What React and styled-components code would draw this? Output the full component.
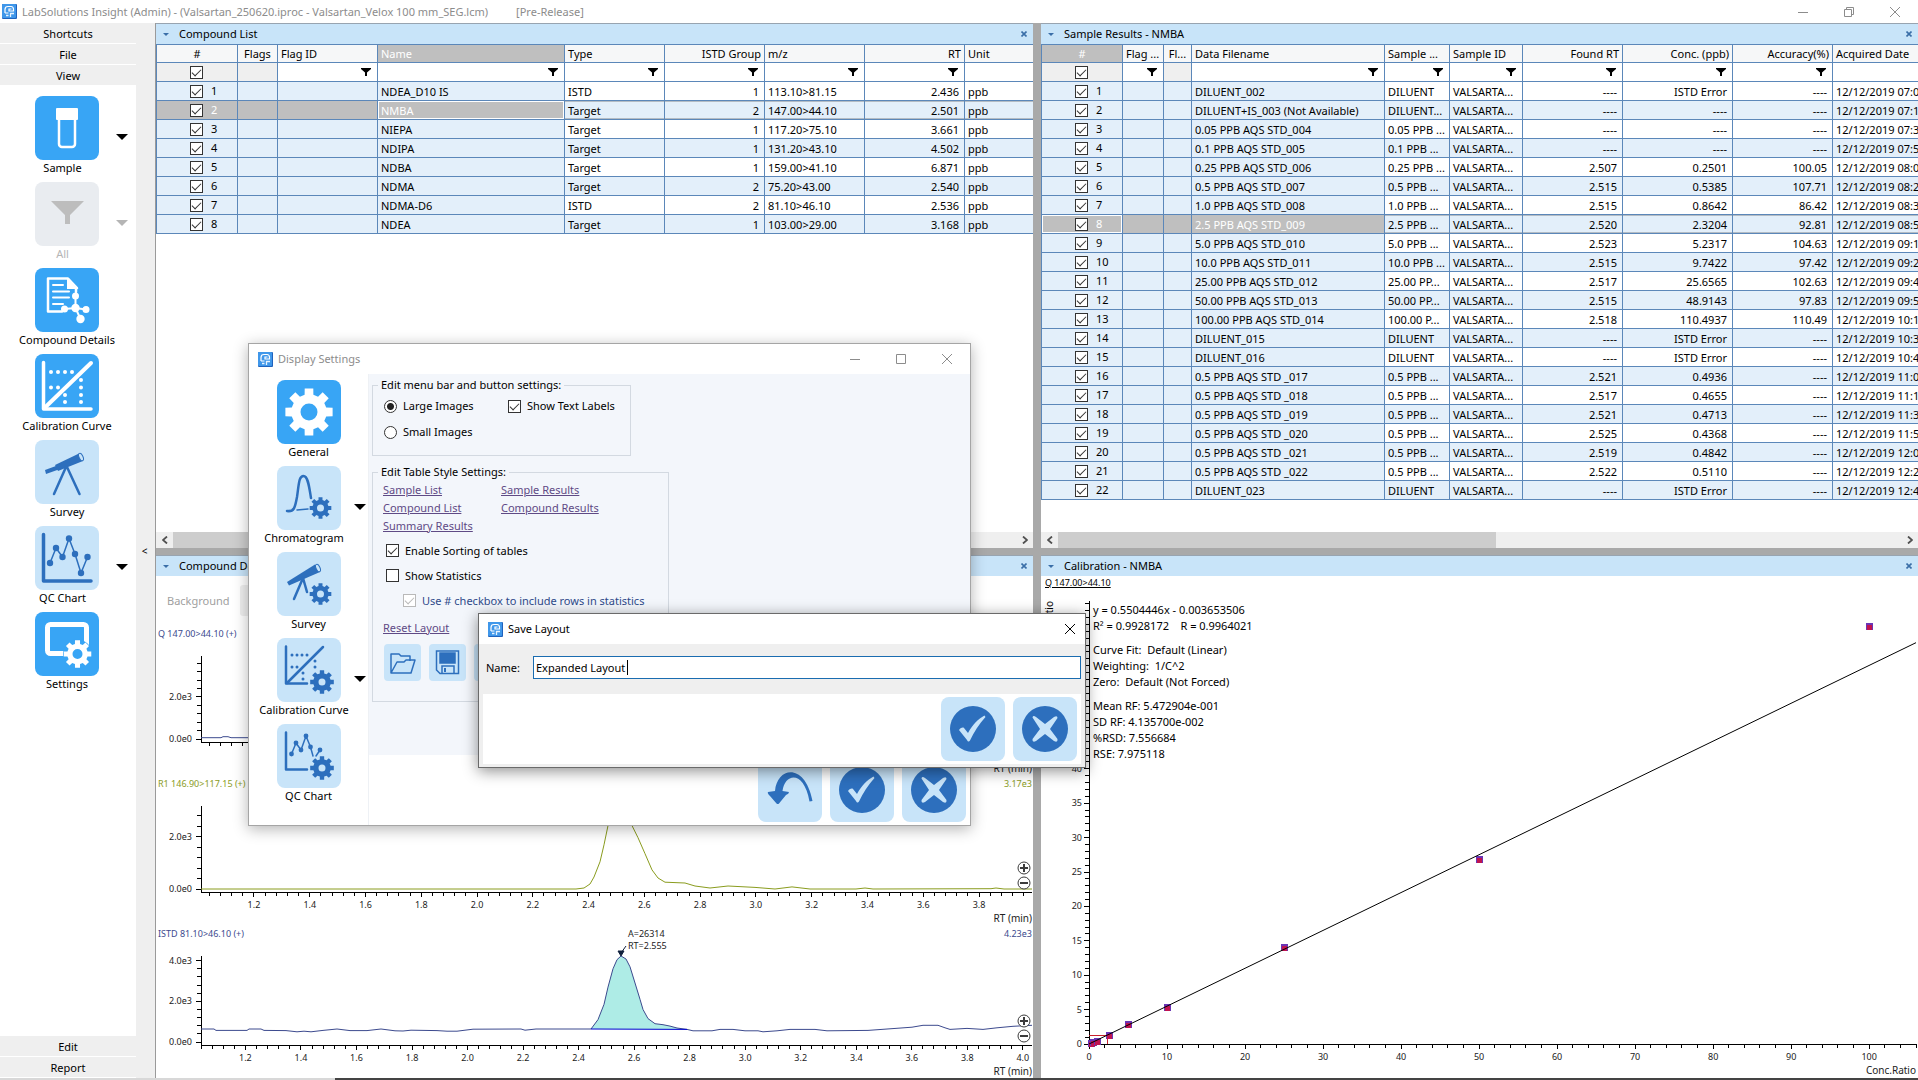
import { useLayoutEffect, useRef, useState } from 'react'
import styled, { createGlobalStyle, css } from 'styled-components'

const colors = {
  tileOn: '#38a5f5',
  tileOff: '#c8e4f9',
  tileDisabled: '#e9ecf0',
  icon: '#2d6fbd',
  header: '#c8e4f9',
  grid: '#5b87b9',
  rowBlue: '#e3effa',
  selected: '#bfbfbf',
  chrome: '#efefef',
  splitter: '#a9a9a9',
  trace: '#3c4a8e',
  green: '#8a9c1e',
  link: '#5f4a85'
}

const GlobalStyle = createGlobalStyle`
  * {
    box-sizing: border-box;
  }

  body {
    background: #ffffff;
    margin: 0;
    overflow: hidden;
  }

  body, button, input {
    color: #000000;
    font-family: 'Noto Sans', 'Open Sans', sans-serif;
    font-size: 11px;
    line-height: 16px;
  }
`

/* ---------- icons ---------- */

function gearPath(cx, cy, r, hole) {
  const teeth = 8
  const root = r * 0.74
  const points = []
  for (let i = 0; i < teeth; i++) {
    const a = (i / teeth) * Math.PI * 2 - Math.PI / 2
    const at = (angle, radius) => `${(cx + Math.cos(angle) * radius).toFixed(2)} ${(cy + Math.sin(angle) * radius).toFixed(2)}`
    points.push(at(a - 0.25, root), at(a - 0.18, r), at(a + 0.18, r), at(a + 0.25, root))
  }
  return `M${points.join('L')}Z M${cx + hole} ${cy}A${hole} ${hole} 0 1 0 ${cx - hole} ${cy}A${hole} ${hole} 0 1 0 ${cx + hole} ${cy}Z`
}

function Gear({ x, y, r, hole }) {
  return <path d={gearPath(x, y, r, hole)} fill='currentColor' fillRule='evenodd' />
}

function Dots({ points, r = 2 }) {
  return points.map(([x, y]) => <circle key={`${x}-${y}`} cx={x} cy={y} r={r} fill='currentColor' />)
}

const Glyph = styled.svg`
  display: block;
  fill: none;
  height: 64px;
  stroke-linecap: round;
  stroke-linejoin: round;
  width: 64px;
`

const icons = {
  sample: <>
    <rect x='21' y='12' width='22' height='12' rx='1' fill='currentColor' />
    <path d='M24 24V48a3 3 0 0 0 3 3h10a3 3 0 0 0 3-3V24' stroke='currentColor' strokeWidth='2.5' />
  </>,
  filter: <path d='M16 19H49L35 33V42H30V33Z' fill='currentColor' />,
  details: <>
    <path d='M13 10.500H33L42 20M13 10.500V43.500H27M41 20V24' stroke='currentColor' strokeWidth='2.500' />
    <path d='M32 10V21H42Z' fill='currentColor' />
    <path d='M18 17H28M18 23.500H34M18 29.500H34M18 36H28' stroke='currentColor' strokeWidth='2' />
    <path d='M40.500 28V40M29.500 41L40.500 40L51 41.500M40.500 40L45.500 51' stroke='currentColor' strokeWidth='2' />
    <Dots points={[[40.5, 28], [29.5, 41], [51, 41.5]]} r={3.5} />
    <Dots points={[[40.5, 40], [45.5, 51]]} r={4.2} />
  </>,
  calibration: <>
    <path d='M8.500 8.500V55H56' stroke='currentColor' strokeWidth='3.500' />
    <path d='M10 53.500L56 9' stroke='currentColor' strokeWidth='4' />
    <Dots points={[[16, 18], [23, 18], [30, 18], [37, 18], [16, 33.5], [23, 33.5], [46, 26], [46, 33.5], [46, 41], [46, 48], [30, 41], [30, 48]]} />
  </>,
  survey: <>
    <path d='M10 30L25 24.500L26.500 28.500L11 34Z' fill='currentColor' />
    <path d='M20 25L44 13.500L48 21L23 31Z' fill='currentColor' />
    <ellipse cx='46' cy='17' rx='2' ry='4' transform='rotate(-24 46 17)' fill={colors.tileOff} stroke='currentColor' strokeWidth='1' />
    <path d='M31 27L19 54M32 27L44.500 54' stroke='currentColor' strokeWidth='2.500' />
  </>,
  qc: <>
    <path d='M8.500 8.500V55H56' stroke='currentColor' strokeWidth='3.500' />
    <path d='M15 37L21 22L27.500 31L34 12.500L40 28L46 47L52.500 31' stroke='currentColor' strokeWidth='1.500' />
    <Dots points={[[15, 37], [21, 22], [27.5, 31], [34, 12.5], [40, 28], [46, 47], [52.5, 31]]} r={3.2} />
  </>,
  settings: <>
    <rect x='12.500' y='12.500' width='39' height='29' rx='3' stroke='currentColor' strokeWidth='5' />
    <circle cx='42.500' cy='42' r='14.500' fill={colors.tileOn} />
    <Gear x={42.5} y={42} r={14} hole={5} />
  </>,
  general: <Gear x={32} y={32} r={24} hole={8.5} />,
  chromatogram: <>
    <path d='M10 45C17 46 18 42 20 31C22 17 22 10 26.500 10C31 10 32 20 34 32' stroke='currentColor' strokeWidth='2.500' />
    <path d='M20 44L31 43' stroke='currentColor' strokeWidth='1.500' />
    <Gear x={43.5} y={42} r={11} hole={3.5} />
  </>,
  surveyGear: <>
    <path d='M10 30L38 12.500L43 20L12 33.500Z' fill='currentColor' />
    <ellipse cx='41' cy='16' rx='2' ry='4' transform='rotate(-24 41 16)' fill={colors.tileOff} stroke='currentColor' strokeWidth='1' />
    <path d='M26 26L17 47M26 26L30 40' stroke='currentColor' strokeWidth='2.500' />
    <Gear x={43.5} y={42} r={11} hole={3.5} />
  </>,
  calibrationGear: <>
    <path d='M9 8.500V45.500H30' stroke='currentColor' strokeWidth='2.500' />
    <path d='M10 45L46 9' stroke='currentColor' strokeWidth='2.500' />
    <Dots points={[[15, 17], [20, 17], [25, 17], [30, 17], [15, 29], [20, 29], [38, 23], [38, 29], [26, 35], [26, 41]]} r={1.5} />
    <Gear x={45} y={44} r={12} hole={3.5} />
  </>,
  qcGear: <>
    <path d='M9 8.500V45.500H30' stroke='currentColor' strokeWidth='2.500' />
    <path d='M14.500 30L19 19L24 26L29 12L33.500 23L36 32M39 32L43 26' stroke='currentColor' strokeWidth='1.500' />
    <Dots points={[[14.5, 30], [19, 19], [24, 26], [29, 12], [33.5, 23], [43, 26]]} r={2.4} />
    <Gear x={45} y={44} r={12} hole={3.5} />
  </>,
  accept: <>
    <circle cx='32' cy='32' r='23' fill='currentColor' />
    <path d='M18 33C20 30.500 22 30 23 31L27 36C32 27 37 22 43.500 18.500L44.500 20C38 27 33 35 29 43.500C28 45 27 45 26 43Z' fill={colors.tileOff} />
  </>,
  cancel: <>
    <circle cx='32' cy='32' r='23' fill='currentColor' />
    <path d='M19.500 20.500Q20 18 23 20L32 27L41 20Q44.500 18 44.500 21L37 32L44.500 42Q45 46 41 44L32 37L23 44Q19 46 19.500 42L27 32Z' fill={colors.tileOff} />
  </>,
  undo: <path d='M10 34L17 33C19 9 47 4 54.500 43L51.500 43.500C46 12 27 15 24.500 33L31 34Q31 36 28 37L21 45.500Q20 46.500 18.500 45.500L12 38Q9 35 10 34Z' fill='currentColor' />
}

function Icon({ name }) {
  return <Glyph viewBox='0 0 64 64' aria-hidden='true'>{icons[name]}</Glyph>
}

const LogoSvg = styled.svg`
  display: block;
  flex: none;
  height: 15px;
  width: 15px;
`

function Logo() {
  return (
    <LogoSvg viewBox='0 0 15 15' aria-hidden='true'>
      <rect width='15' height='15' rx='1' fill='#1f62bd' />
      <rect width='14' height='14' rx='1' fill='#3f97ea' />
      <path d='M3 9V5.500Q3 2.500 6 2.500H9Q11.500 2.500 11.500 5.500V7H7V5H9.500M3 9H6.500' fill='none' stroke='#ffffff' strokeWidth='1.200' />
      <path d='M4 11.500H6.500M8.500 13V9.500H12' fill='none' stroke='#e6f3ff' strokeWidth='1.300' />
    </LogoSvg>
  )
}

function FilterIcon() {
  return (
    <svg width='10' height='8' viewBox='0 0 10 8' aria-hidden='true'>
      <path d='M0 0H10V1L6 4.500V8H4V4.500L0 1Z' fill='#000000' />
    </svg>
  )
}

/* ---------- window chrome ---------- */

const TitleBar = styled.header`
  align-items: center;
  background: #ffffff;
  color: ${p => p.$active ? '#000000' : '#8c8c8c'};
  display: flex;
  flex: none;
  height: ${p => p.$main ? '23px' : '30px'};
  padding-left: ${p => p.$main ? '2px' : '9px'};
`

const TitleText = styled.span`
  flex: 1;
  padding-left: 5px;
`

const ReleaseTag = styled.span`
  padding-left: 28px;
`

const WindowButton = styled.button`
  align-items: center;
  background: transparent;
  border: none;
  color: inherit;
  display: flex;
  height: 20px;
  justify-content: center;
  padding: 0;
  width: ${p => p.$narrow ? '31px' : '46px'};
`

const windowGlyphs = {
  Minimize: 'M0 5.500H10',
  Maximize: 'M.5 .5H9.500V9.500H.5Z',
  Restore: 'M.5 2.500H7.500V9.500H.5ZM2.500 2.500V.5H9.500V7.500H7.500',
  Close: 'M0 0L10 10M10 0L0 10'
}

function WindowButtons({ names, narrow }) {
  return names.map(name => (
    <WindowButton key={name} type='button' aria-label={name} $narrow={narrow}>
      <svg width='10' height='10' viewBox='0 0 10 10' aria-hidden='true'>
        <path d={windowGlyphs[name]} fill='none' stroke='currentColor' />
      </svg>
    </WindowButton>
  ))
}

const Screen = styled.div`
  display: flex;
  flex-direction: column;
  height: 100vh;
  overflow: hidden;
  position: relative;
`

const Body = styled.div`
  display: flex;
  flex: 1;
  min-height: 0;
`

const Taskbar = styled.div`
  background: linear-gradient(90deg, #d8d8d8 335px, #444444 335px);
  flex: none;
  height: 2px;
`

/* ---------- shortcut tiles ---------- */

const Sidebar = styled.nav`
  display: flex;
  flex: none;
  flex-direction: column;
  width: 136px;
`

const SidebarSection = styled.button`
  background: ${colors.chrome};
  border: none;
  border-bottom: 1px solid #ffffff;
  flex: none;
  height: 21px;
  padding: 2px 0 0;
  text-align: center;
  width: 100%;
`

const TileList = styled.div`
  display: flex;
  flex: none;
  flex-direction: column;
  padding-top: ${p => p.$top};
  width: ${p => p.$width};
`

const Spacer = styled.div`
  flex: 1;
`

const TileItem = styled.div`
  display: grid;
  grid-template-columns: 1fr 64px 1fr;
  grid-template-rows: 64px 22px;
`

const Tile = styled.button`
  background: ${p => p.$tone === 'on' ? colors.tileOn : p.$tone === 'disabled' ? colors.tileDisabled : colors.tileOff};
  border: none;
  border-radius: 8px;
  color: ${p => p.$tone === 'on' ? '#ffffff' : p.$tone === 'disabled' ? '#bdbdbd' : colors.icon};
  grid-column: 2;
  height: 64px;
  padding: 0;
  width: 64px;
`

const TileMenu = styled.button`
  align-self: center;
  background: transparent;
  border: none;
  border-left: 6px solid transparent;
  border-right: 6px solid transparent;
  border-top: 6px solid ${p => p.$muted ? '#b5b5b5' : '#000000'};
  grid-column: 3;
  height: 0;
  justify-self: end;
  margin: 18px ${p => p.$gap} 0 0;
  padding: 0;
  width: 12px;
`

const TileLabel = styled.span`
  color: ${p => p.$muted ? '#b5b5b5' : '#000000'};
  grid-column: 1 / -1;
  padding-right: ${p => p.$shifted ? '9px' : '0'};
  text-align: center;
`

function Tiles({ items, width, top, gap }) {
  return (
    <TileList $width={width} $top={top}>
      {items.map(({ label, icon, tone, menu }) => (
        <TileItem key={label}>
          <Tile type='button' aria-label={label} $tone={tone}><Icon name={icon} /></Tile>
          {menu && <TileMenu type='button' aria-label={`${label} menu`} $muted={tone === 'disabled'} $gap={gap} />}
          <TileLabel $muted={tone === 'disabled'} $shifted={menu}>{label}</TileLabel>
        </TileItem>
      ))}
    </TileList>
  )
}

const shortcuts = [
  { label: 'Sample', icon: 'sample', tone: 'on', menu: true },
  { label: 'All', icon: 'filter', tone: 'disabled', menu: true },
  { label: 'Compound Details', icon: 'details', tone: 'on' },
  { label: 'Calibration Curve', icon: 'calibration', tone: 'on' },
  { label: 'Survey', icon: 'survey' },
  { label: 'QC Chart', icon: 'qc', menu: true },
  { label: 'Settings', icon: 'settings', tone: 'on' }
]

const settingsPages = [
  { label: 'General', icon: 'general', tone: 'on' },
  { label: 'Chromatogram', icon: 'chromatogram', menu: true },
  { label: 'Survey', icon: 'surveyGear' },
  { label: 'Calibration Curve', icon: 'calibrationGear', menu: true },
  { label: 'QC Chart', icon: 'qcGear' }
]

const CollapseBar = styled.button`
  background: ${colors.chrome};
  border: none;
  border-right: 1px solid #9a9a9a;
  flex: none;
  font-size: 10px;
  padding: 0 2px 0 0;
  width: 20px;
`

/* ---------- panels ---------- */

const Workspace = styled.main`
  background: ${colors.splitter};
  display: grid;
  flex: 1;
  gap: 7px 8px;
  grid-template-columns: minmax(0, 1fr) minmax(0, 1fr);
  grid-template-rows: minmax(0, 525fr) minmax(0, 523fr);
  min-width: 0;
`

const PanelBox = styled.section`
  background: #ffffff;
  display: flex;
  flex-direction: column;
  min-height: 0;
  min-width: 0;
`

const PanelHeader = styled.div`
  align-items: center;
  background: ${colors.header};
  border-top: 1px solid #98a4b0;
  display: flex;
  flex: none;
  height: 21px;
  padding: 0 6px 0 7px;
`

const PanelTitle = styled.h2`
  flex: 1;
  font-size: 11px;
  font-weight: 400;
  line-height: 16px;
  margin: 0;
`

const Caret = styled.span`
  border-left: 3px solid transparent;
  border-right: 3px solid transparent;
  border-top: 3px solid #3a6ea8;
  margin-right: 10px;
`

const PanelClose = styled.button`
  background: transparent;
  border: none;
  height: 6px;
  padding: 0;
  width: 6px;

  svg {
    display: block;
  }
`

function Panel({ title, children }) {
  return (
    <PanelBox>
      <PanelHeader>
        <Caret />
        <PanelTitle>{title}</PanelTitle>
        <PanelClose type='button' aria-label={`Close ${title}`}>
          <svg width='6' height='6' viewBox='0 0 6 6' aria-hidden='true'>
            <path d='M.5 .5L5.500 5.500M5.500 .5L.5 5.500' stroke='#3a6ea8' strokeWidth='1.600' />
          </svg>
        </PanelClose>
      </PanelHeader>
      {children}
    </PanelBox>
  )
}

const Checkbox = styled.input.attrs({ type: 'checkbox' })`
  appearance: none;
  background: #ffffff;
  border: 1px solid #333333;
  flex: none;
  height: 13px;
  margin: 0;
  position: relative;
  width: 13px;

  &:checked::after {
    border-bottom: 1px solid #333333;
    border-left: 1px solid #333333;
    content: '';
    height: 4px;
    left: 1px;
    position: absolute;
    top: 2px;
    transform: rotate(-45deg);
    width: 8px;
  }

  &:disabled, &:disabled::after {
    border-color: #b9b9b9;
  }
`

const TableWrap = styled.div`
  flex: 1;
  min-height: 0;
  overflow: hidden;
`

const Table = styled.table`
  border-collapse: separate;
  border-left: 1px solid ${colors.grid};
  border-spacing: 0;
  border-top: 1px solid ${colors.grid};
  table-layout: fixed;
  width: 100%;
`

const cell = css`
  border-bottom: 1px solid ${colors.grid};
  border-right: 1px solid ${colors.grid};
  font-weight: 400;
  height: 19px;
  overflow: hidden;
  text-align: ${p => p.$align || 'left'};
  white-space: pre;

  &:last-child {
    border-right: none;
  }
`

const HeadCell = styled.th`
  ${cell}
  background: ${p => p.$selected ? colors.selected : '#f6f7f8'};
  color: ${p => p.$selected ? '#ffffff' : '#000000'};
  height: 18px;
  padding: 0 ${p => p.$align === 'center' ? '0' : '3px'};
`

const FilterCell = styled.td`
  ${cell}
  background: ${p => p.$plain ? colors.chrome : '#ffffff'};
  line-height: 8px;
  padding: 0 6px 0 0;
  text-align: right;
`

const Cell = styled.td`
  ${cell}
  background: ${p => p.$blue ? colors.rowBlue : '#ffffff'};
  padding: 1px 5px 0 3px;

  &:first-child {
    padding-top: 0;
  }

  &:last-child {
    padding-right: 0;
  }

  ${p => p.$current && css`
    box-shadow: inset 0 1px #b4bcc4, inset 0 -1px #b4bcc4;
  `}
  ${p => p.$selected && css`
    background: ${colors.selected};
    color: #ffffff;
  `}
  ${p => p.$focused && css`
    box-shadow: inset 0 0 0 1px #ffffff;
  `}
`

const RowPicker = styled.div`
  align-items: center;
  display: flex;
  gap: 8px;
  line-height: 16px;
  padding-left: ${p => p.$head ? '33px' : '30px'};
`

function DataTable({ name, columns, rows, frozen, selectedRow, focusColumn }) {
  return (
    <TableWrap>
      <Table aria-label={name}>
        <colgroup>
          {columns.map(c => <col key={c.label} width={c.width} />)}
        </colgroup>
        <thead>
          <tr>
            {columns.map((c, i) => (
              <HeadCell key={c.label} scope='col' $align={c.align} $selected={i === focusColumn}>{c.label}</HeadCell>
            ))}
          </tr>
          <tr>
            {columns.map((c, i) => (
              <FilterCell key={c.label} $plain={i === 0 || c.plain}>
                {i === 0 && <RowPicker $head><Checkbox aria-label='Select all rows' defaultChecked /></RowPicker>}
                {c.filter && <FilterIcon />}
              </FilterCell>
            ))}
          </tr>
        </thead>
        <tbody>
          {rows.map((row, r) => {
            const current = r + 1 === selectedRow
            return (
              <tr key={r}>
                {['', ...row].map((value, i) => (
                  <Cell
                    key={i}
                    $align={i > 0 ? columns[i].align : 'left'}
                    $blue={i < frozen || r % 2 === 1}
                    $current={current && i >= frozen}
                    $selected={current && i < frozen}
                    $focused={current && i === focusColumn}
                  >
                    {i === 0
                      ? <RowPicker><Checkbox aria-label={`Row ${r + 1}`} defaultChecked />{r + 1}</RowPicker>
                      : value}
                  </Cell>
                ))}
              </tr>
            )
          })}
        </tbody>
      </Table>
    </TableWrap>
  )
}

const ScrollBar = styled.div`
  background: ${colors.chrome};
  display: grid;
  flex: none;
  grid-template-columns: 17px 1fr 17px;
  height: 16px;
`

const ScrollThumb = styled.div`
  background: #cdcdcd;
  width: ${p => p.$size};
`

const ScrollArrow = styled.button`
  background: transparent;
  border: none;
  display: grid;
  padding: 0;
  place-items: center;
`

function HorizontalScroll({ size }) {
  return (
    <ScrollBar>
      <ScrollArrow type='button' aria-label='Scroll left'>
        <svg width='6' height='8' viewBox='0 0 6 8' aria-hidden='true'><path d='M5 .5L1 4L5 7.500' fill='none' stroke='#505050' strokeWidth='1.800' /></svg>
      </ScrollArrow>
      <ScrollThumb $size={size} />
      <ScrollArrow type='button' aria-label='Scroll right'>
        <svg width='6' height='8' viewBox='0 0 6 8' aria-hidden='true'><path d='M1 .5L5 4L1 7.500' fill='none' stroke='#505050' strokeWidth='1.800' /></svg>
      </ScrollArrow>
    </ScrollBar>
  )
}

const compoundColumns = [
  { label: '#', width: 81, align: 'center' },
  { label: 'Flags', width: 40, align: 'center', plain: true },
  { label: 'Flag ID', width: 100, filter: true },
  { label: 'Name', width: 187, filter: true },
  { label: 'Type', width: 100, filter: true },
  { label: 'ISTD Group', width: 100, align: 'right', filter: true },
  { label: 'm/z', width: 100, filter: true },
  { label: 'RT', width: 100, align: 'right', filter: true },
  { label: 'Unit' }
]

const compounds = [
  ['', '', 'NDEA_D10 IS', 'ISTD', '1', '113.10>81.15', '2.436', 'ppb'],
  ['', '', 'NMBA', 'Target', '2', '147.00>44.10', '2.501', 'ppb'],
  ['', '', 'NIEPA', 'Target', '1', '117.20>75.10', '3.661', 'ppb'],
  ['', '', 'NDIPA', 'Target', '1', '131.20>43.10', '4.502', 'ppb'],
  ['', '', 'NDBA', 'Target', '1', '159.00>41.10', '6.871', 'ppb'],
  ['', '', 'NDMA', 'Target', '2', '75.20>43.00', '2.540', 'ppb'],
  ['', '', 'NDMA-D6', 'ISTD', '2', '81.10>46.10', '2.536', 'ppb'],
  ['', '', 'NDEA', 'Target', '1', '103.00>29.00', '3.168', 'ppb']
]

const resultColumns = [
  { label: '#', width: 81, align: 'center' },
  { label: 'Flag ...', width: 41, filter: true },
  { label: 'Fl...', width: 28, align: 'center', plain: true },
  { label: 'Data Filename', width: 193, filter: true },
  { label: 'Sample ...', width: 65, filter: true },
  { label: 'Sample ID', width: 73, filter: true },
  { label: 'Found RT', width: 100, align: 'right', filter: true },
  { label: 'Conc. (ppb)', width: 110, align: 'right', filter: true },
  { label: 'Accuracy(%)', width: 100, align: 'right', filter: true },
  { label: 'Acquired Date' }
]

const none = '----'
const results = [
  ['DILUENT_002', 'DILUENT', none, 'ISTD Error', none, '07:0'],
  ['DILUENT+IS_003 (Not Available)', 'DILUENT...', none, none, none, '07:1'],
  ['0.05 PPB AQS STD_004', '0.05 PPB ...', none, none, none, '07:3'],
  ['0.1 PPB AQS STD_005', '0.1 PPB ...', none, none, none, '07:5'],
  ['0.25 PPB AQS STD_006', '0.25 PPB ...', '2.507', '0.2501', '100.05', '08:0'],
  ['0.5 PPB AQS STD_007', '0.5 PPB ...', '2.515', '0.5385', '107.71', '08:2'],
  ['1.0 PPB AQS STD_008', '1.0 PPB ...', '2.515', '0.8642', '86.42', '08:3'],
  ['2.5 PPB AQS STD_009', '2.5 PPB ...', '2.520', '2.3204', '92.81', '08:5'],
  ['5.0 PPB AQS STD_010', '5.0 PPB ...', '2.523', '5.2317', '104.63', '09:1'],
  ['10.0 PPB AQS STD_011', '10.0 PPB ...', '2.515', '9.7422', '97.42', '09:2'],
  ['25.00 PPB AQS STD_012', '25.00 PP...', '2.517', '25.6565', '102.63', '09:4'],
  ['50.00 PPB AQS STD_013', '50.00 PP...', '2.515', '48.9143', '97.83', '09:5'],
  ['100.00 PPB AQS STD_014', '100.00 P...', '2.518', '110.4937', '110.49', '10:1'],
  ['DILUENT_015', 'DILUENT', none, 'ISTD Error', none, '10:3'],
  ['DILUENT_016', 'DILUENT', none, 'ISTD Error', none, '10:4'],
  ['0.5 PPB AQS STD _017', '0.5 PPB ...', '2.521', '0.4936', none, '11:0'],
  ['0.5 PPB AQS STD _018', '0.5 PPB ...', '2.517', '0.4655', none, '11:1'],
  ['0.5 PPB AQS STD _019', '0.5 PPB ...', '2.521', '0.4713', none, '11:3'],
  ['0.5 PPB AQS STD _020', '0.5 PPB ...', '2.525', '0.4368', none, '11:5'],
  ['0.5 PPB AQS STD _021', '0.5 PPB ...', '2.519', '0.4842', none, '12:0'],
  ['0.5 PPB AQS STD _022', '0.5 PPB ...', '2.522', '0.5110', none, '12:2'],
  ['DILUENT_023', 'DILUENT', none, 'ISTD Error', none, '12:4']
].map(([file, sample, rt, conc, accuracy, time]) => (
  ['', '', file, sample, 'VALSARTA...', rt, conc, accuracy, `12/12/2019 ${time}`]
))

/* ---------- charts ---------- */

function useSize() {
  const ref = useRef(null)
  const [size, setSize] = useState({ width: 877, height: 150 })
  useLayoutEffect(() => {
    const measure = () => setSize({ width: ref.current.clientWidth, height: ref.current.clientHeight })
    measure()
    const observer = new ResizeObserver(measure)
    observer.observe(ref.current)
    return () => observer.disconnect()
  }, [])
  return [ref, size]
}

const ChartBox = styled.div`
  flex: ${p => p.$weight || 1} 1 0;
  min-height: 0;
  overflow: hidden;
  position: relative;
`

const ChartSvg = styled.svg`
  display: block;
  font-size: 10px;
`

const AxisText = styled.text`
  fill: #222222;
  font-size: 9px;
`

const TraceName = styled.text`
  font-size: 9px;
`

const crisp = { stroke: '#000000', shapeRendering: 'crispEdges', fill: 'none' }

function toPath(points) {
  return 'M' + points.map(([x, y]) => `${x.toFixed(1)} ${y.toFixed(1)}`).join('L')
}

function ZoomButtons({ x, y }) {
  return (
    <g fill='#ffffff' stroke='#3c3c3c'>
      <circle cx={x} cy={y} r='6' />
      <path d={`M${x - 4} ${y}H${x + 4}M${x} ${y - 4}V${y + 4}`} strokeWidth='2' />
      <circle cx={x} cy={y + 15} r='6' />
      <path d={`M${x - 4} ${y + 15}H${x + 4}`} strokeWidth='2' />
    </g>
  )
}

// points are [scan, counts], 831 scans over the shown time range
function Chromatogram({ label, max, color, yMax, range, points, peak, weight }) {
  const [ref, { width, height }] = useSize()
  const left = 45
  const right = width - 1
  const top = 31
  const axis = height - 33
  const zero = axis - 3
  const px = scan => left + (scan / 831) * (right - left)
  const py = counts => zero - (counts / yMax) * (zero - top)
  const pt = t => left + ((t - range[0]) / (range[1] - range[0])) * (right - left)

  const xTicks = []
  for (let i = Math.ceil(range[0] / 0.04); i * 0.04 <= range[1]; i++) xTicks.push(i)
  const yTicks = []
  for (let i = 0; i * 400 <= yMax; i++) yTicks.push(i)
  const trace = points.map(([x, y]) => [px(x), py(y)])

  return (
    <ChartBox ref={ref} $weight={weight}>
      <ChartSvg width={width} height={height}>
        <TraceName x='2' y='12' fill={color}>{label}</TraceName>
        <TraceName x={right} y='12' textAnchor='end' fill={color}>{max}</TraceName>
        <path {...crisp} d={`M${left} ${top}V${axis}H${right}`} />
        {yTicks.map(i => (
          <path key={i} {...crisp} d={`M${left} ${py(i * 400)}H${left - (i % 5 ? 4 : 5)}`} />
        ))}
        {yTicks.filter(i => i % 5 === 0).map(i => (
          <AxisText key={i} x='36' y={py(i * 400) + 3} textAnchor='end'>{(i * 0.4).toFixed(1)}e{i ? 3 : 0}</AxisText>
        ))}
        {xTicks.map(i => (
          <path key={i} {...crisp} d={`M${pt(i * 0.04)} ${axis}v${i % 5 ? 4 : 5}`} />
        ))}
        {xTicks.filter(i => i % 5 === 0 && i > 25).map(i => (
          <AxisText key={i} x={pt(i * 0.04)} y={axis + 16} textAnchor='middle'>{(i * 0.04).toFixed(1)}</AxisText>
        ))}
        <text x={right} y={height - 3} textAnchor='end' fill='#222222'>RT (min)</text>
        {peak && <path d={toPath(trace.slice(peak.from, peak.to + 1)) + 'Z'} fill='#aeece6' />}
        <path d={toPath(trace)} fill='none' stroke={color} />
        {peak && <>
          <path d={toPath([trace[peak.from], trace[peak.to]])} stroke='#0000d0' />
          <path d={`M${px(peak.scan) - 3} 26h6l-3 5ZM${px(peak.scan)} 28l5 -7`} fill='#10203c' stroke='#10203c' />
          <AxisText x={px(peak.scan) + 7} y='12'>{peak.area}</AxisText>
          <AxisText x={px(peak.scan) + 7} y='24'>{peak.rt}</AxisText>
        </>}
        <ZoomButtons x={right - 8} y={axis - 24} />
      </ChartSvg>
    </ChartBox>
  )
}

const quantTrace = [
  [0, 60], [20, 60], [22, 110], [27, 110], [30, 60], [370, 60], [386, 300], [400, 1700],
  [415, 3800], [432, 2500], [452, 600], [480, 200], [560, 80], [831, 60]
]

const referenceTrace = [
  [0, 0], [375, 0], [383, 40], [389, 190], [393, 460], [399, 1040], [403, 1690], [407, 2420],
  [411, 2900], [416, 3170], [423, 3000], [431, 2420], [437, 1960], [444, 1350], [451, 730],
  [457, 420], [464, 260], [484, 230], [494, 115], [509, 40], [527, 115], [554, 60], [574, 0],
  [591, 80], [609, 0], [655, 0], [664, 40], [672, 0], [790, 10], [795, 40], [803, 0], [831, 0]
]

const internalTrace = [
  [0, 640], [13, 640], [15, 570], [46, 570], [48, 640], [60, 640], [63, 570], [85, 560],
  [96, 500], [103, 530], [110, 500], [122, 570], [136, 640], [149, 560], [166, 560], [180, 640],
  [194, 550], [202, 540], [210, 580], [236, 560], [246, 530], [256, 530], [272, 630], [320, 640],
  [324, 580], [335, 640], [390, 640], [397, 1100], [403, 1850], [407, 2700], [412, 3600],
  [416, 4050], [420, 4230], [425, 4080], [429, 3700], [434, 2900], [439, 2100], [442, 1600],
  [447, 1150], [454, 900], [462, 850], [469, 780], [476, 690], [486, 620], [492, 550], [511, 550],
  [519, 620], [532, 620], [544, 550], [557, 550], [562, 500], [576, 550], [589, 620], [614, 620],
  [626, 550], [667, 570], [689, 650], [711, 730], [722, 820], [737, 820], [744, 700], [749, 620],
  [766, 670], [782, 620], [796, 700], [812, 770], [831, 820]
]

const DetailsToolbar = styled.div`
  align-items: center;
  color: #a0a0a0;
  display: flex;
  flex: none;
  gap: 10px;
  height: 49px;
  padding-left: 11px;
`

const ToolButton = styled.button`
  background: ${colors.chrome};
  border: none;
  border-radius: 3px;
  height: 31px;
  padding: 0;
  width: 31px;
`

const UnderlinedLabel = styled.div`
  flex: none;
  font-size: 9px;
  height: 14px;
  line-height: 14px;
  padding-left: 4px;
  text-decoration: underline;
`

const FitReport = styled.div`
  display: grid;
  gap: 8px;
  left: 52px;
  position: absolute;
  top: 12px;
  white-space: pre;

  p {
    margin: 0;
  }
`

const standards = [
  [0.25, 0.14], [0.5, 0.3], [1, 0.5], [2.5, 1.3], [5, 2.9], [10, 5.4], [25, 14.1], [50, 26.9], [100, 60.8]
]

function CalibrationChart() {
  const [ref, { width, height }] = useSize()
  const left = 48
  const top = 11
  const zero = height - 34
  const right = width - 2
  const px = x => left + (x / 106) * (right - left)
  const py = y => zero - (y / 64.4) * (zero - top)
  const range = (from, to) => Array.from({ length: to - from + 1 }, (_, i) => from + i)

  return (
    <ChartBox ref={ref}>
      <ChartSvg width={width} height={height}>
        <text transform='translate(12 11) rotate(-90)' textAnchor='end'>Area Ratio</text>
        <path {...crisp} d={`M${left} ${top}V${zero}H${right}`} />
        {range(0, 64).map(i => (
          <path key={i} {...crisp} d={`M${left} ${py(i)}h${i % 5 ? -4 : -5}`} />
        ))}
        {range(0, 12).map(i => (
          <AxisText key={i} x={left - 7} y={py(i * 5) + 3} textAnchor='end'>{i * 5}</AxisText>
        ))}
        {range(0, 53).map(i => (
          <path key={i} {...crisp} d={`M${px(i * 2)} ${zero}v${i % 5 ? 4 : 5}`} />
        ))}
        {range(0, 10).map(i => (
          <AxisText key={i} x={px(i * 10)} y={zero + 16} textAnchor='middle'>{i * 10}</AxisText>
        ))}
        <text x={right} y={height - 4} textAnchor='end' fill='#222222'>Conc.Ratio</text>
        <path d={`M${left} ${py(1.25)}H${px(2.32)}V${zero}`} fill='none' stroke='#c8202c' shapeRendering='crispEdges' />
        {standards.map(([x, y]) => (
          <g key={x} shapeRendering='crispEdges'>
            <rect x={px(x) - 3} y={py(y) - 3} width='7' height='7' fill='#6a35b5' />
            <rect x={px(x) - 2} y={py(y) - 1} width='5' height='5' fill='#c01450' />
          </g>
        ))}
        <path d={`M${px(0)} ${py(0)}L${px(106)} ${py(58.34)}`} stroke='#000000' />
      </ChartSvg>
      <FitReport>
        <p>y = 0.5504446x - 0.003653506{'\n'}R² = 0.9928172    R = 0.9964021</p>
        <p>Curve Fit:  Default (Linear){'\n'}Weighting:  1/C^2{'\n'}Zero:  Default (Not Forced)</p>
        <p>Mean RF: 5.472904e-001{'\n'}SD RF: 4.135700e-002{'\n'}%RSD: 7.556684{'\n'}RSE: 7.975118</p>
      </FitReport>
    </ChartBox>
  )
}

/* ---------- dialogs ---------- */

const Dialog = styled.div`
  background: #ffffff;
  border: 1px solid ${p => p.$active ? '#6a6a6a' : '#a5a5a5'};
  box-shadow: 0 3px 14px rgba(0, 0, 0, ${p => p.$active ? 0.45 : 0.3});
  display: flex;
  flex-direction: column;
  left: ${p => p.$x};
  position: absolute;
  top: ${p => p.$y};
  width: ${p => p.$width};
`

const DialogBody = styled.div`
  display: flex;
`

const DialogMain = styled.div`
  border-left: 1px solid #eef1f5;
  display: flex;
  flex: 1;
  flex-direction: column;
`

const SettingsForm = styled.form`
  background: #f3f6fb;
  display: flex;
  flex: 1;
  flex-direction: column;
  gap: 8px;
  padding: 3px 3px 53px;
`

const Group = styled.fieldset`
  align-self: flex-start;
  border: 1px solid #d3d9e1;
  margin: 0;
  min-height: ${p => p.$height};
  min-width: 0;
  padding: 0 0 0 10px;
  width: ${p => p.$width};
`

const Legend = styled.legend`
  margin-left: -5px;
  padding: 0 3px;
`

const ImageOptions = styled.div`
  display: grid;
  grid-template-columns: 124px 1fr;
`

const Option = styled.label`
  align-items: center;
  color: ${p => p.$muted ? '#2f4a8a' : '#000000'};
  display: flex;
  gap: 6px;
  height: ${p => p.$tall ? '26px' : '25px'};
  padding-left: ${p => p.$indent || '0'};
`

const Radio = styled.input.attrs({ type: 'radio' })`
  appearance: none;
  background: #ffffff;
  border: 1px solid #333333;
  border-radius: 50%;
  height: 13px;
  margin: 0;
  width: 13px;

  &:checked {
    background: radial-gradient(circle, #222222 3px, #ffffff 4px);
  }
`

const Links = styled.div`
  display: grid;
  grid-template-columns: 118px 1fr;
  line-height: 18px;
  padding: ${p => p.$spaced ? '6px' : '1px'} 0 3px;
`

const Link = styled.a`
  color: ${colors.link};
  justify-self: start;
  text-decoration: underline;
`

const LayoutButtons = styled.div`
  display: flex;
  gap: 8px;
  padding: 4px 1px 0;
`

const LayoutButton = styled.button`
  background: ${colors.tileOff};
  border: none;
  border-radius: 4px;
  color: ${colors.icon};
  height: 37px;
  padding: 0;
  width: 37px;

  svg {
    display: block;
  }
`

const DialogActions = styled.div`
  background: #ffffff;
  display: flex;
  gap: 8px;
  justify-content: flex-end;
  padding: 3px 4px;
`

const NameRow = styled.div`
  align-items: center;
  background: ${colors.chrome};
  display: flex;
  height: 50px;
  padding: 0 4px 3px 7px;

  label {
    width: 47px;
  }
`

const NameInput = styled.input`
  background: #ffffff linear-gradient(#000000, #000000) 93px 3px / 1px 15px no-repeat;
  border: 1px solid #1a6cb0;
  caret-color: transparent;
  flex: 1;
  height: 23px;
  min-width: 0;
  outline: none;
  padding: 0 2px;
`

const SaveFooter = styled.div`
  border: solid ${colors.chrome};
  border-width: 0 4px 3px;
`

function DisplaySettings() {
  return (
    <Dialog role='dialog' aria-label='Display Settings' $x='248px' $y='343px' $width='723px'>
      <TitleBar>
        <Logo />
        <TitleText>Display Settings</TitleText>
        <WindowButtons names={['Minimize', 'Maximize', 'Close']} />
      </TitleBar>
      <DialogBody>
        <Tiles items={settingsPages} width='119px' top='6px' gap='2px' />
        <DialogMain>
          <SettingsForm>
            <Group $width='259px' $height='79px'>
              <Legend>Edit menu bar and button settings:</Legend>
              <ImageOptions>
                <Option $tall $indent='1px'><Radio name='images' defaultChecked />Large Images</Option>
                <Option $tall $indent='1px'><Checkbox defaultChecked />Show Text Labels</Option>
                <Option $tall $indent='1px'><Radio name='images' />Small Images</Option>
              </ImageOptions>
            </Group>
            <Group $width='297px' $height='238px'>
              <Legend>Edit Table Style Settings:</Legend>
              <Links>
                <Link href='#sample-list'>Sample List</Link>
                <Link href='#sample-results'>Sample Results</Link>
                <Link href='#compound-list'>Compound List</Link>
                <Link href='#compound-results'>Compound Results</Link>
                <Link href='#summary-results'>Summary Results</Link>
              </Links>
              <Option $indent='3px'><Checkbox defaultChecked />Enable Sorting of tables</Option>
              <Option $indent='3px'><Checkbox />Show Statistics</Option>
              <Option $indent='20px' $muted><Checkbox defaultChecked disabled />Use # checkbox to include rows in statistics</Option>
              <Links $spaced><Link href='#reset'>Reset Layout</Link></Links>
              <LayoutButtons>
                <LayoutButton type='button' aria-label='Open layout'>
                  <svg width='37' height='37' viewBox='0 0 37 37' fill='none' stroke='currentColor' strokeWidth='1.500' aria-hidden='true'>
                    <path d='M7 29V10H15L17 12H26V17M7 29L13 18H20L22 16H31L27 29Z' strokeLinejoin='round' />
                  </svg>
                </LayoutButton>
                <LayoutButton type='button' aria-label='Save layout'>
                  <svg width='37' height='37' viewBox='0 0 37 37' fill='none' stroke='currentColor' strokeWidth='1.500' aria-hidden='true'>
                    <path d='M7.500 7H29.500V29.500H11L7.500 26ZM13 29V22H25V29' />
                    <rect x='11' y='9' width='15' height='10' fill='currentColor' />
                    <path d='M16 24V28' strokeWidth='2' />
                  </svg>
                </LayoutButton>
                <LayoutButton type='button' aria-label='Delete layout' />
              </LayoutButtons>
            </Group>
          </SettingsForm>
          <DialogActions>
            <Tile type='button' aria-label='Undo'><Icon name='undo' /></Tile>
            <Tile type='button' aria-label='OK'><Icon name='accept' /></Tile>
            <Tile type='button' aria-label='Cancel'><Icon name='cancel' /></Tile>
          </DialogActions>
        </DialogMain>
      </DialogBody>
    </Dialog>
  )
}

function SaveLayout() {
  return (
    <Dialog role='dialog' aria-label='Save Layout' $active $x='478px' $y='613px' $width='608px'>
      <TitleBar $active>
        <Logo />
        <TitleText>Save Layout</TitleText>
        <WindowButtons names={['Close']} narrow />
      </TitleBar>
      <NameRow>
        <label htmlFor='layout-name'>Name:</label>
        <NameInput id='layout-name' type='text' defaultValue='Expanded Layout' autoFocus />
      </NameRow>
      <SaveFooter>
        <DialogActions>
          <Tile type='button' aria-label='Save'><Icon name='accept' /></Tile>
          <Tile type='button' aria-label='Discard'><Icon name='cancel' /></Tile>
        </DialogActions>
      </SaveFooter>
    </Dialog>
  )
}

export default function App() {
  return (
    <Screen>
      <GlobalStyle />
      <TitleBar $main>
        <Logo />
        <TitleText>
          LabSolutions Insight (Admin) - (Valsartan_250620.iproc - Valsartan_Velox 100 mm_SEG.lcm)
          <ReleaseTag>[Pre-Release]</ReleaseTag>
        </TitleText>
        <WindowButtons names={['Minimize', 'Restore', 'Close']} />
      </TitleBar>
      <Body>
        <Sidebar aria-label='Shortcuts'>
          <SidebarSection type='button'>Shortcuts</SidebarSection>
          <SidebarSection type='button'>File</SidebarSection>
          <SidebarSection type='button'>View</SidebarSection>
          <Tiles items={shortcuts} width='134px' top='10px' gap='6px' />
          <Spacer />
          <SidebarSection type='button'>Edit</SidebarSection>
          <SidebarSection type='button'>Report</SidebarSection>
        </Sidebar>
        <CollapseBar type='button' aria-label='Collapse shortcuts'>&lt;</CollapseBar>
        <Workspace>
          <Panel title='Compound List'>
            <DataTable name='Compound List' columns={compoundColumns} rows={compounds} frozen={4} selectedRow={2} focusColumn={3} />
            <HorizontalScroll size='92%' />
          </Panel>
          <Panel title='Sample Results - NMBA'>
            <DataTable name='Sample Results' columns={resultColumns} rows={results} frozen={4} selectedRow={8} focusColumn={0} />
            <HorizontalScroll size='52%' />
          </Panel>
          <Panel title='Compound Details - NMBA'>
            <DetailsToolbar>
              Background
              <ToolButton type='button' aria-label='Background options' disabled />
            </DetailsToolbar>
            <Chromatogram label='Q 147.00>44.10 (+)' max='3.95e3' color={colors.trace} yMax={3950} range={[1.01, 3.99]} points={quantTrace} weight={150} />
            <Chromatogram label='R1 146.90>117.15 (+)' max='3.17e3' color={colors.green} yMax={3170} range={[1.01, 3.99]} points={referenceTrace} weight={150} />
            <Chromatogram
              label='ISTD 81.10>46.10 (+)'
              max='4.23e3'
              color={colors.trace}
              yMax={4230}
              range={[1.04, 4.033]}
              points={internalTrace}
              peak={{ from: 26, to: 43, scan: 420, area: 'A=26314', rt: 'RT=2.555' }}
              weight={153}
            />
          </Panel>
          <Panel title='Calibration - NMBA'>
            <UnderlinedLabel>Q 147.00&gt;44.10</UnderlinedLabel>
            <CalibrationChart />
          </Panel>
        </Workspace>
      </Body>
      <Taskbar />
      <DisplaySettings />
      <SaveLayout />
    </Screen>
  )
}
